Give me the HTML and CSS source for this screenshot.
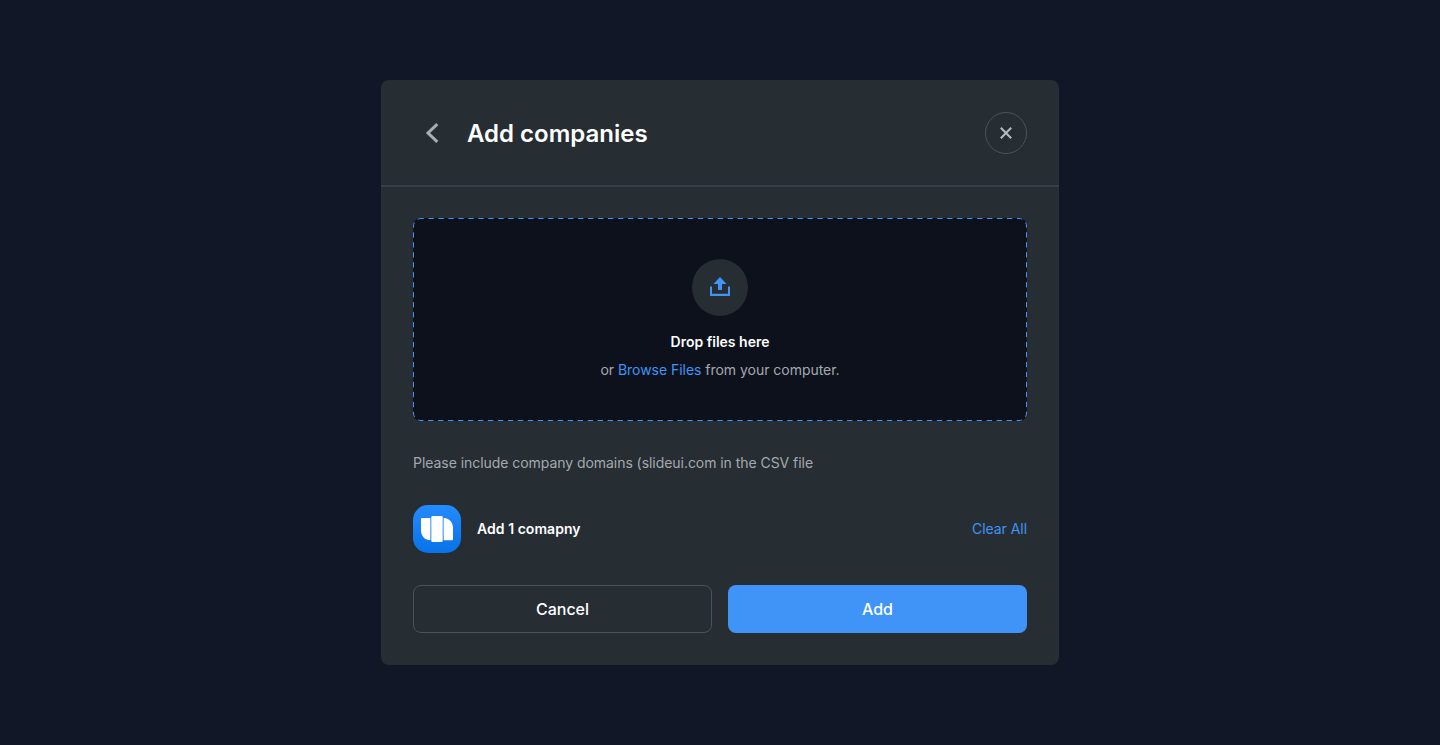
FILE: index.html
```html
<!DOCTYPE html>
<html lang="en">
<head>
<meta charset="utf-8">
<title>Add companies</title>
<link rel="stylesheet" href="styles.css">
</head>
<body>
<main class="modal">
  <header class="modal-header">
    <button class="back" aria-label="Back">
      <svg width="38" height="42" viewBox="0 0 38 42"><path d="M24.300 12.200 15 21l9.300 8.900" fill="none" stroke="#a9adb4" stroke-width="3"/></svg>
    </button>
    <h1 class="title">Add companies</h1>
    <button class="close" aria-label="Close">
      <svg width="12" height="12" viewBox="0 0 12 12"><path d="M.8.8l10.400 10.400M11.200.8.8 11.200" stroke="#b7bbc0" stroke-width="2"/></svg>
    </button>
  </header>
  <div class="modal-body">
    <section class="dropzone">
      <svg class="dropzone-border" width="614" height="203"><rect x=".5" y=".5" width="613" height="202" rx="7.5" fill="none" stroke="#4094f7" stroke-dasharray="5.3 4.675" stroke-dashoffset="2.5"/></svg>
      <div class="upload">
        <svg width="20" height="20" viewBox="0 0 20 20"><path d="M10 0l6.500 7H12v6H8V7H3.500zM0 9.500h2v7.300h16V9.500h2v9.500H0z" fill="#4094f7"/></svg>
      </div>
      <p class="drop-title">Drop files here</p>
      <p class="drop-text">or <a class="link">Browse Files</a> from your computer.</p>
    </section>
    <p class="note">Please include company domains (slideui.com in the CSV file</p>
    <div class="company">
      <svg class="logo" width="48" height="48" viewBox="0 0 48 48">
        <defs><linearGradient id="blue" x1="0" y1="0" x2="0" y2="1"><stop stop-color="#258bff"/><stop offset="1" stop-color="#0872e8"/></linearGradient></defs>
        <rect width="48" height="48" rx="15" fill="url(#blue)"/>
        <path d="M9 13h8.400v22.300C12 35.300 8 31 8 25.500V14a1 1 0 0 1 1-1zM30.600 13C36 13 40 17.300 40 22.800v11.400a1 1 0 0 1-1 1h-8.400z" fill="#fff"/>
        <rect x="18.300" y="11" width="11.400" height="26" rx="1.300" fill="#fff"/>
      </svg>
      <span class="company-name">Add 1 comapny</span>
      <a class="link clear">Clear All</a>
    </div>
    <div class="actions">
      <button class="btn cancel">Cancel</button>
      <button class="btn add">Add</button>
    </div>
  </div>
</main>
</body>
</html>
```
FILE: styles.css
```css
* { box-sizing: border-box; }
body { margin: 0; height: 745px; padding-top: 80px; background: #111726; font-family: Inter, sans-serif; color: #fff; }
h1, p { margin: 0; }
button { font: inherit; color: inherit; padding: 0; border: 0; background: none; }
svg { display: block; }
.modal { width: 678px; height: 585px; margin: 0 auto; border-radius: 8px; background: #262d33; }
.modal-header { display: flex; align-items: center; height: 107px; padding: 1px 32px 0; border-bottom: 2px solid #373e45; }
.back { width: 38px; height: 42px; }
.title { flex: 1; padding: 2px 0 0 16px; font-size: 24px; line-height: 36px; font-weight: 600; }
.close { display: flex; align-items: center; justify-content: center; width: 42px; height: 42px; border: 1px solid #4c5259; border-radius: 50%; }
.modal-body { padding: 31px 32px 32px; }
.dropzone { position: relative; display: flex; flex-direction: column; align-items: center; height: 203px; padding-top: 41px; border-radius: 8px; background: #0c111b; }
.dropzone-border { position: absolute; inset: 0; }
.upload { display: flex; align-items: center; justify-content: center; width: 56px; height: 57px; padding-bottom: 1px; border-radius: 50%; background: #262d33; }
.drop-title { margin-top: 14px; font-size: 14px; line-height: 24px; font-weight: 600; }
.drop-text { margin-top: 4px; font-size: 14px; line-height: 24px; letter-spacing: -.03px; color: #a5a9af; }
.link { color: #4094f7; }
.note { margin-top: 30px; font-size: 14px; line-height: 24px; letter-spacing: -.05px; color: #a5a9af; }
.company { display: flex; align-items: center; margin-top: 30px; }
.company-name { flex: 1; padding-left: 16px; font-size: 14px; line-height: 24px; font-weight: 600; letter-spacing: .04px; }
.clear { font-size: 14px; line-height: 24px; letter-spacing: -.05px; }
.actions { display: grid; grid-template-columns: 1fr 1fr; gap: 16px; margin-top: 32px; }
.btn { height: 48px; border-radius: 8px; font-size: 16px; font-weight: 500; }
.cancel { border: 1px solid #4c5259; }
.add { background: #4094f7; }
```
